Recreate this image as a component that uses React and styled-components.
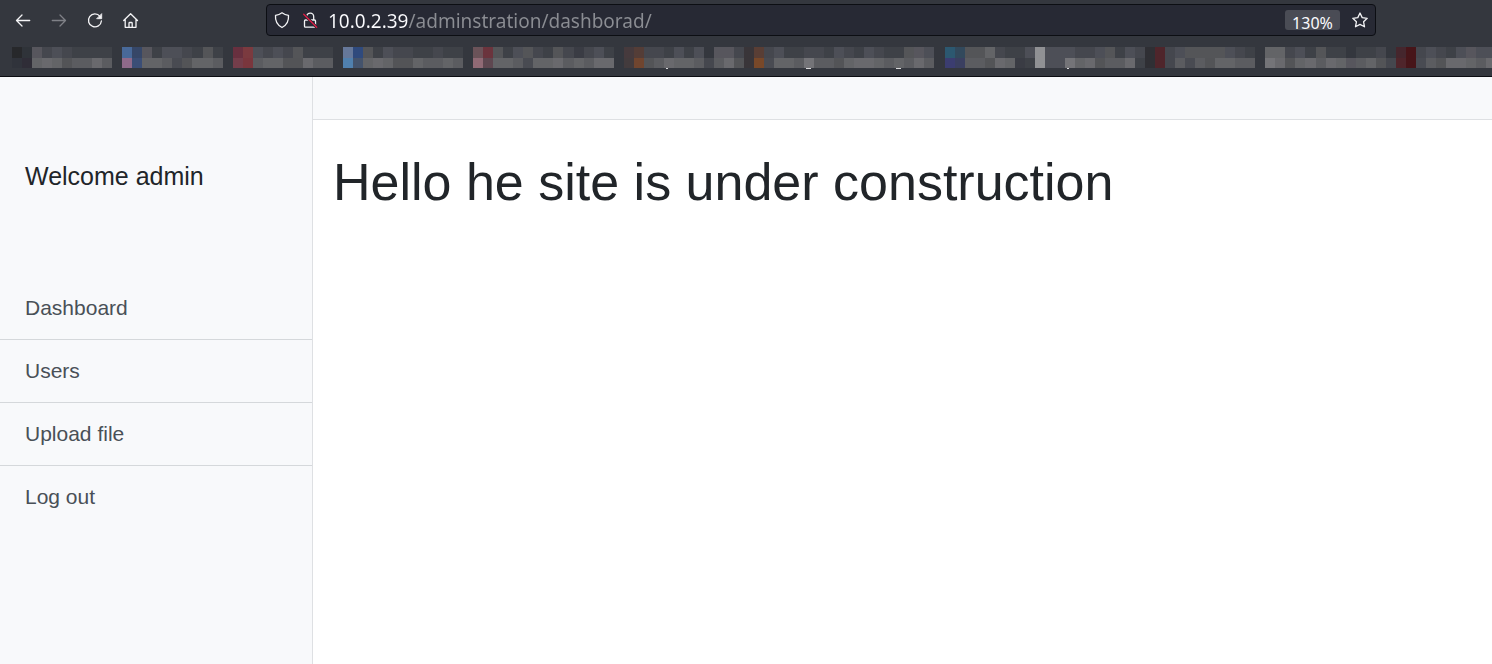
import React from "react";
import styled, { createGlobalStyle } from "styled-components";

const GlobalStyle = createGlobalStyle`
  *, *::before, *::after { box-sizing: border-box; }
  body {
    margin: 0;
    background: #ffffff;
    color: #212529;
    font-family: "Liberation Sans", Arial, sans-serif;
  }
`;

const Screen = styled.div`
  display: flex;
  flex-direction: column;
  min-height: 100vh;
`;

/* Browser chrome */

const Chrome = styled.header`
  background: #34373e;
  border-bottom: 1px solid #0c0d12;
  padding-bottom: 8px;
  overflow: hidden;
  font-family: "Noto Sans", sans-serif;
`;

const NavBar = styled.div`
  display: grid;
  grid-template-columns: 266px minmax(0, 1110fr) minmax(0, 116fr);
  align-items: center;
  height: 40px;
`;

const NavButtons = styled.div`
  display: flex;
  gap: 12px;
  padding-left: 11px;
`;

const IconButton = styled.button`
  display: grid;
  place-items: center;
  flex: none;
  width: 24px;
  height: 24px;
  padding: 0;
  border: 0;
  background: none;
  color: ${(p) => (p.$dim ? "#7f8187" : "#f4f4f6")};
`;

const AddressBar = styled.form`
  display: flex;
  align-items: center;
  gap: 4px;
  height: 32px;
  padding: 0 3px;
  background: #272934;
  border: 1px solid #0c0e13;
  border-radius: 4px;
`;

const AddressInput = styled.input`
  flex: 1;
  min-width: 0;
  height: 30px;
  padding: 2px 0 0 2px;
  border: 0;
  outline: 0;
  font: 19px/28px "Noto Sans", sans-serif;
  color: #fbfbfe;
  background: linear-gradient(to right, #fbfbfe 82px, #8b8d93 82px);
  background-clip: text;
  -webkit-background-clip: text;
  -webkit-text-fill-color: transparent;
`;

const ZoomBadge = styled.button`
  height: 20px;
  width: 55px;
  margin-right: 4px;
  padding: 3px 0 0;
  border: 0;
  border-radius: 3px;
  background: #4a4c55;
  color: #fbfbfe;
  font: 16px/20px "Noto Sans", sans-serif;
`;

const Bookmarks = styled.nav`
  display: flex;
  margin: 7px -4px 0 12px;
`;

const BookmarkTile = styled.button`
  flex: ${(p) => p.$cells} 1 0;
  min-width: 0;
  display: grid;
  grid-template-columns: repeat(${(p) => p.$cells}, minmax(0, 1fr));
  grid-template-rows: 11px 10px;
  padding: 0;
  border: 0;
  background: none;
`;

const Cell = styled.span`
  position: relative;
  background: ${(p) => p.$color};

  &::after {
    content: "";
    display: ${(p) => (p.$tail ? "block" : "none")};
    position: absolute;
    top: 100%;
    left: 2px;
    width: ${(p) => p.$tail}px;
    height: 1px;
    background: #d8d8da;
  }
`;

/* Site */

const Site = styled.div`
  flex: 1;
  display: flex;
`;

const Sidebar = styled.aside`
  flex: none;
  width: 313px;
  background: #f8f9fb;
  border-right: 1px solid #dee0e3;
`;

const Greeting = styled.h2`
  margin: 0;
  padding: 84px 25px 85px;
  font-size: 25px;
  line-height: 31px;
  font-weight: 400;
`;

const Menu = styled.nav`
  display: flex;
  flex-direction: column;
`;

const MenuLink = styled.a`
  padding: 16px 25px;
  font-size: 21px;
  line-height: 30px;
  color: #495057;
  text-decoration: none;

  & + & { border-top: 1px solid #d5d8db; }
`;

const Main = styled.main`
  flex: 1;
  min-width: 0;
`;

const TopBar = styled.div`
  height: 43px;
  background: #f8f9fb;
  border-bottom: 1px solid #dee0e3;
`;

const Title = styled.h1`
  margin: 0;
  padding: 31px 20px;
  font-size: 52px;
  line-height: 62px;
  font-weight: 400;
`;

const tones = {
  ".": "transparent",
  a: "#3e4147", b: "#45474e", c: "#4d4f57", d: "#545558", e: "#57565d",
  f: "#494b52", g: "#535457", h: "#5b5c60", i: "#636467", j: "#69696d",
  k: "#747478", l: "#3a3c44",
  A: "#27282b", B: "#2f3339", C: "#30333b", D: "#2f2d37",
  E: "#486999", F: "#364768", G: "#8f6a8a", H: "#3b4e76",
  I: "#68303f", J: "#7b3a3f", K: "#743d4a", L: "#7a363d",
  M: "#66789a", N: "#2f4a7d", O: "#5080ae", P: "#44536c",
  Q: "#6b5359", R: "#6b343d", S: "#906a75", T: "#5e4750",
  U: "#463a3d", V: "#543d37", W: "#433b3d", X: "#70452f",
  Y: "#393539", Z: "#593e35", 0: "#784829",
  1: "#2c5870", 2: "#32495c", 3: "#3b3d70", 4: "#3a3f60",
  5: "#909194", 6: "#2f2f34", 7: "#4f252b", 8: "#45262d", 9: "#471519",
};

const bookmarks = [
  { rows: ["ABebcbaaaa.", "CDijighhjh."] },
  { rows: ["EFeaccbada.", "GHiihfgiih."] },
  { rows: ["IJcbcbdaaa.", "KLhiiggjhh."] },
  { rows: ["MNdacbbaabaa.", "OPijiggihhih."] },
  { rows: ["QRdacdbadblbca.", "STiihfiijhihjj."] },
  { rows: ["UVbbacac.eebY", "WXghjiihbhjgY"], tails: { 4: 2 } },
  { rows: ["Zbcaabbacbacbaadec.", "0fiihkhhgijjihihjh."], tails: { 5: 5, 14: 5 } },
  { rows: ["12ddibaac", "34hhgjila"] },
  { rows: ["5cccbbcdacb", "5cckijghhja"], tails: { 3: 2 } },
  { rows: ["67bcddddcba.", "67bhfhgiihh."] },
  { rows: ["iibcadaa.aab.", "kjgijhjiehigb"] },
  { rows: ["89bcbacecc", "79fhgjjihj"] },
];

const Bookmark = ({ rows, tails = {}, label }) => (
  <BookmarkTile type="button" $cells={rows[0].length} aria-label={label}>
    {rows.map((row, y) =>
      [...row].map((tone, x) => (
        <Cell key={`${y}-${x}`} $color={tones[tone]} $tail={y === 1 ? tails[x] : undefined} />
      ))
    )}
  </BookmarkTile>
);

const Icon = ({ children, width = 1.3 }) => (
  <svg
    width="18" height="18" viewBox="0 0 18 18" fill="none" stroke="currentColor"
    strokeWidth={width} strokeLinecap="round" strokeLinejoin="round" aria-hidden="true"
  >
    {children}
  </svg>
);

const BackIcon = () => <Icon><path d="M15.7 9.500H2.500M8 4 2.500 9.500 8 15" /></Icon>;
const ForwardIcon = () => <Icon><path d="M2.300 9.500h13.200M10 4 15.500 9.500 10 15" /></Icon>;
const ReloadIcon = () => (
  <Icon>
    <path d="M14 5.300A6.500 6.500 0 1 0 15.400 10" />
    <path d="M15.700 3v4.700H11z" fill="currentColor" strokeWidth="0.8" />
  </Icon>
);
const HomeIcon = () => (
  <Icon>
    <path d="M1.700 9.500 8.600 2.700 15.500 9.500M3.200 8.500V16.300h10.800V8.500M7 16v-3.700a.8.8 0 0 1 .8-.8h1.600a.8.8 0 0 1 .8.8V16" />
  </Icon>
);
const ShieldIcon = () => (
  <Icon><path d="M9 1.800c2 1.500 4.200 2.300 6.500 2.600.4 5-1.500 9.600-6.500 12.100C4 14 2.100 9.400 2.500 4.400 4.800 4.100 7 3.300 9 1.800z" /></Icon>
);
const InsecureIcon = () => (
  <Icon>
    <path d="M5.700 5.500a3.500 3.500 0 0 1 7 .2V8.500M4.500 9h9a1 1 0 0 1 1 1v5.200a1 1 0 0 1-1 1h-9a1 1 0 0 1-1-1V10a1 1 0 0 1 1-1z" />
    <path d="M2.700 3.300 15.700 16.300" stroke="#272934" strokeWidth="3" />
    <path d="M2.700 3.300 15.700 16.300" stroke="#e01b45" />
  </Icon>
);
const StarIcon = () => (
  <Icon>
    <path d="m9 2 2.200 4.600 5 .7-3.600 3.500.9 5L9 13.400l-4.500 2.400.9-5L1.800 7.300l5-.7z" />
  </Icon>
);

const links = ["Dashboard", "Users", "Upload file", "Log out"];

export default function App() {
  return (
    <Screen>
      <GlobalStyle />
      <Chrome>
        <NavBar>
          <NavButtons>
            <IconButton type="button" aria-label="Back"><BackIcon /></IconButton>
            <IconButton type="button" aria-label="Forward" $dim><ForwardIcon /></IconButton>
            <IconButton type="button" aria-label="Reload"><ReloadIcon /></IconButton>
            <IconButton type="button" aria-label="Home"><HomeIcon /></IconButton>
          </NavButtons>
          <AddressBar onSubmit={(e) => e.preventDefault()}>
            <IconButton type="button" aria-label="Tracking protection"><ShieldIcon /></IconButton>
            <IconButton type="button" aria-label="Connection not secure"><InsecureIcon /></IconButton>
            <AddressInput aria-label="Address" defaultValue="10.0.2.39/adminstration/dashborad/" spellCheck={false} />
            <ZoomBadge type="button">130%</ZoomBadge>
            <IconButton type="button" aria-label="Bookmark this page"><StarIcon /></IconButton>
          </AddressBar>
        </NavBar>
        <Bookmarks aria-label="Bookmarks">
          {bookmarks.map((b, i) => (
            <Bookmark key={i} label={`Bookmark ${i + 1}`} {...b} />
          ))}
        </Bookmarks>
      </Chrome>
      <Site>
        <Sidebar>
          <Greeting>Welcome admin</Greeting>
          <Menu aria-label="Administration">
            {links.map((text) => (
              <MenuLink key={text} href="#">{text}</MenuLink>
            ))}
          </Menu>
        </Sidebar>
        <Main>
          <TopBar />
          <Title>Hello he site is under construction</Title>
        </Main>
      </Site>
    </Screen>
  );
}
